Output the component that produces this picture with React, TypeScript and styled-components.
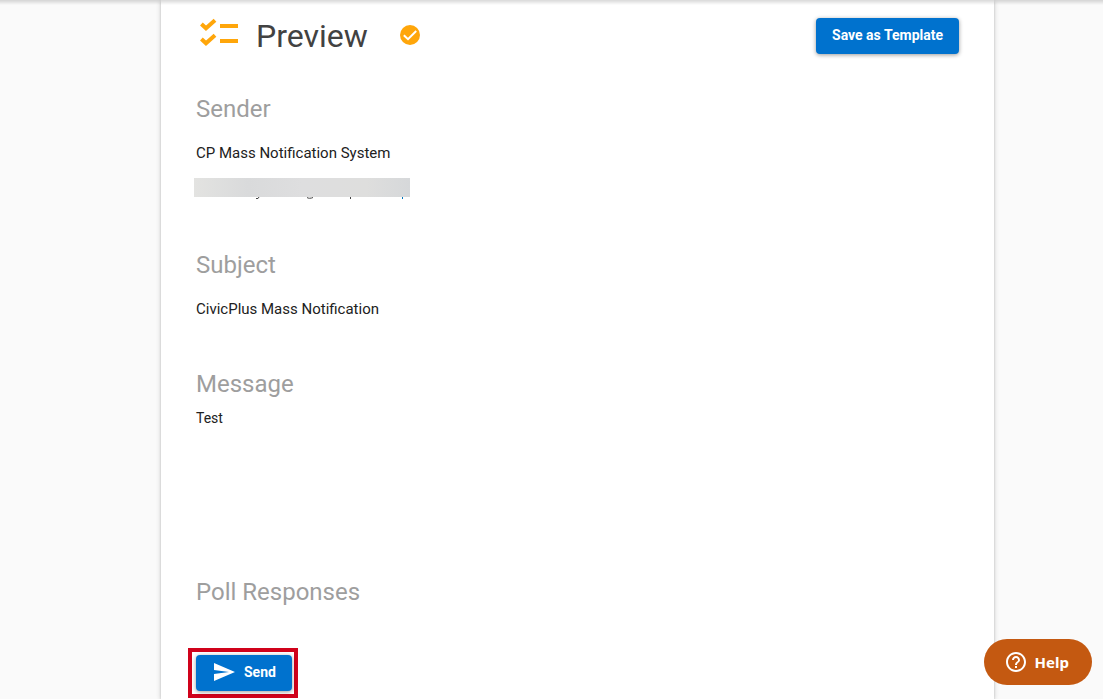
import React from "react";
import styled, { createGlobalStyle } from "styled-components";

const GlobalStyle = createGlobalStyle`
  *, *::before, *::after { box-sizing: border-box; }
  html { overflow-x: hidden; scrollbar-width: none; }
  body {
    margin: 0;
    background: #fafafa;
    color: #212121;
    font-family: Roboto, "Liberation Sans", sans-serif;
    font-size: 15px;
    line-height: 20px;
  }
  h1, h2, p { margin: 0; font-weight: 400; }
`;

const Page = styled.div`
  display: flex;
  min-height: 100vh;
  padding: 0 109px 0 161px;
`;

const TopShade = styled.div`
  position: fixed;
  inset: 0 0 auto;
  height: 5px;
  background: linear-gradient(rgba(0, 0, 0, 0.15), rgba(0, 0, 0, 0));
`;

const Card = styled.main`
  flex: 1;
  min-width: 0;
  padding: 12px 35px 0;
  background: #fff;
  box-shadow: 0 2px 2px rgba(0, 0, 0, 0.14), 0 3px 1px -2px rgba(0, 0, 0, 0.12),
    0 1px 5px rgba(0, 0, 0, 0.2);
`;

const Header = styled.header`
  display: flex;
  align-items: center;
  height: 48px;
`;

const Title = styled.h1`
  margin: 0 32px 0 17px;
  color: #424242;
  font-size: 32px;
  line-height: 48px;
`;

const Button = styled.button`
  display: inline-flex;
  align-items: center;
  gap: 8px;
  height: 36px;
  padding: 0 16px 2px;
  border: 0;
  border-radius: 4px;
  background: #0072ce;
  color: #fff;
  font: 700 14px/34px Roboto, "Liberation Sans", sans-serif;
  box-shadow: 0 1px 4px rgba(0, 0, 0, 0.4);
  cursor: pointer;
`;

const HeaderAction = styled.div`
  margin-left: auto;
`;

const Section = styled.section<{ $height: number }>`
  min-height: ${({ $height }) => $height}px;
`;

const Sections = styled.div`
  padding-top: 33px;
`;

const SectionTitle = styled.h2`
  color: #9e9e9e;
  font-size: 24px;
  line-height: 32px;
`;

const Text = styled.p<{ $gap: number; $small?: boolean }>`
  margin-top: ${({ $gap }) => $gap}px;
  font-size: ${({ $small }) => ($small ? 14 : 15)}px;
`;

const Redacted = styled.div`
  width: 216px;
  margin: 15px 0 0 -2px;
`;

const RedactedBar = styled.div`
  height: 19px;
  background: linear-gradient(90deg, #e3e3e1, #d9dadb 25%, #dededf 50%, #dededd 80%, #d6d8da);
`;

const Tails = styled.svg`
  display: block;
`;

const Highlight = styled.div`
  width: fit-content;
  margin-left: -8px;
  padding: 3px 2px 3px 4px;
  border: 4px solid #d0021b;
`;

const HelpButton = styled.button`
  position: fixed;
  right: 11px;
  bottom: 14px;
  display: flex;
  align-items: center;
  gap: 7px;
  height: 46px;
  padding: 0 23px 0 20px;
  border: 0;
  border-radius: 23px;
  background: #c45911;
  color: #fff;
  font: 700 15px/24px "Noto Sans", sans-serif;
  cursor: pointer;
`;

const ChecklistIcon = () => (
  <svg width="43" height="36" viewBox="0 0 43 36" fill="none" stroke="#ffa60a" strokeWidth="4" aria-hidden="true">
    <path d="M5.4 6 10 10.3 19 2.3M5.4 21 10 25.3 19 17.3M24 8H42M24 23H42" />
  </svg>
);

const CheckBadge = () => (
  <svg width="20" height="22" viewBox="0 0 20 22" aria-hidden="true">
    <circle cx="10" cy="10" r="10" fill="#ffa60a" />
    <path d="M3.8 10.2 8 14.2 16.2 6" fill="none" stroke="#fff" strokeWidth="2" />
  </svg>
);

const SendIcon = () => (
  <svg width="24" height="24" viewBox="0 0 24 24" fill="#fff" aria-hidden="true">
    <path d="M2.010 21 23 12 2.010 3 2 10l15 2-15 2z" />
  </svg>
);

const HelpIcon = () => (
  <svg width="24" height="24" viewBox="0 0 24 24" fill="#fff" aria-hidden="true">
    <path d="M11 18h2v-2h-2v2zm1-16C6.480 2 2 6.480 2 12s4.480 10 10 10 10-4.480 10-10S17.520 2 12 2zm0 18c-4.410 0-8-3.590-8-8s3.590-8 8-8 8 3.590 8 8-3.590 8-8 8zm0-14c-2.210 0-4 1.790-4 4h2c0-1.100.9-2 2-2s2 .9 2 2c0 2-3 1.750-3 5h2c0-2.250 3-2.500 3-5 0-2.210-1.790-4-4-4z" />
  </svg>
);

export default function App() {
  return (
    <>
      <GlobalStyle />
      <Page>
        <Card>
          <Header>
            <ChecklistIcon />
            <Title>Preview</Title>
            <CheckBadge />
            <HeaderAction>
              <Button type="button">Save as Template</Button>
            </HeaderAction>
          </Header>
          <Sections>
            <Section $height={156}>
              <SectionTitle>Sender</SectionTitle>
              <Text $gap={18}>CP Mass Notification System</Text>
              <Redacted>
                <RedactedBar />
                <Tails width="216" height="2" viewBox="0 0 216 2" fill="none" aria-hidden="true">
                  <path d="M62 1.500h2l1-1.500M113 .5c1 1 4 1 6 0M156.500 0v2" stroke="#444" />
                  <path d="M208.500 0v2" stroke="#0277bd" />
                </Tails>
              </Redacted>
            </Section>
            <Section $height={119}>
              <SectionTitle>Subject</SectionTitle>
              <Text $gap={18}>CivicPlus Mass Notification</Text>
            </Section>
            <Section $height={208}>
              <SectionTitle>Message</SectionTitle>
              <Text $gap={8} $small>Test</Text>
            </Section>
            <Section $height={72}>
              <SectionTitle>Poll Responses</SectionTitle>
            </Section>
          </Sections>
          <Highlight>
            <Button type="button">
              <SendIcon />
              Send
            </Button>
          </Highlight>
        </Card>
      </Page>
      <TopShade />
      <HelpButton type="button">
        <HelpIcon />
        Help
      </HelpButton>
    </>
  );
}
